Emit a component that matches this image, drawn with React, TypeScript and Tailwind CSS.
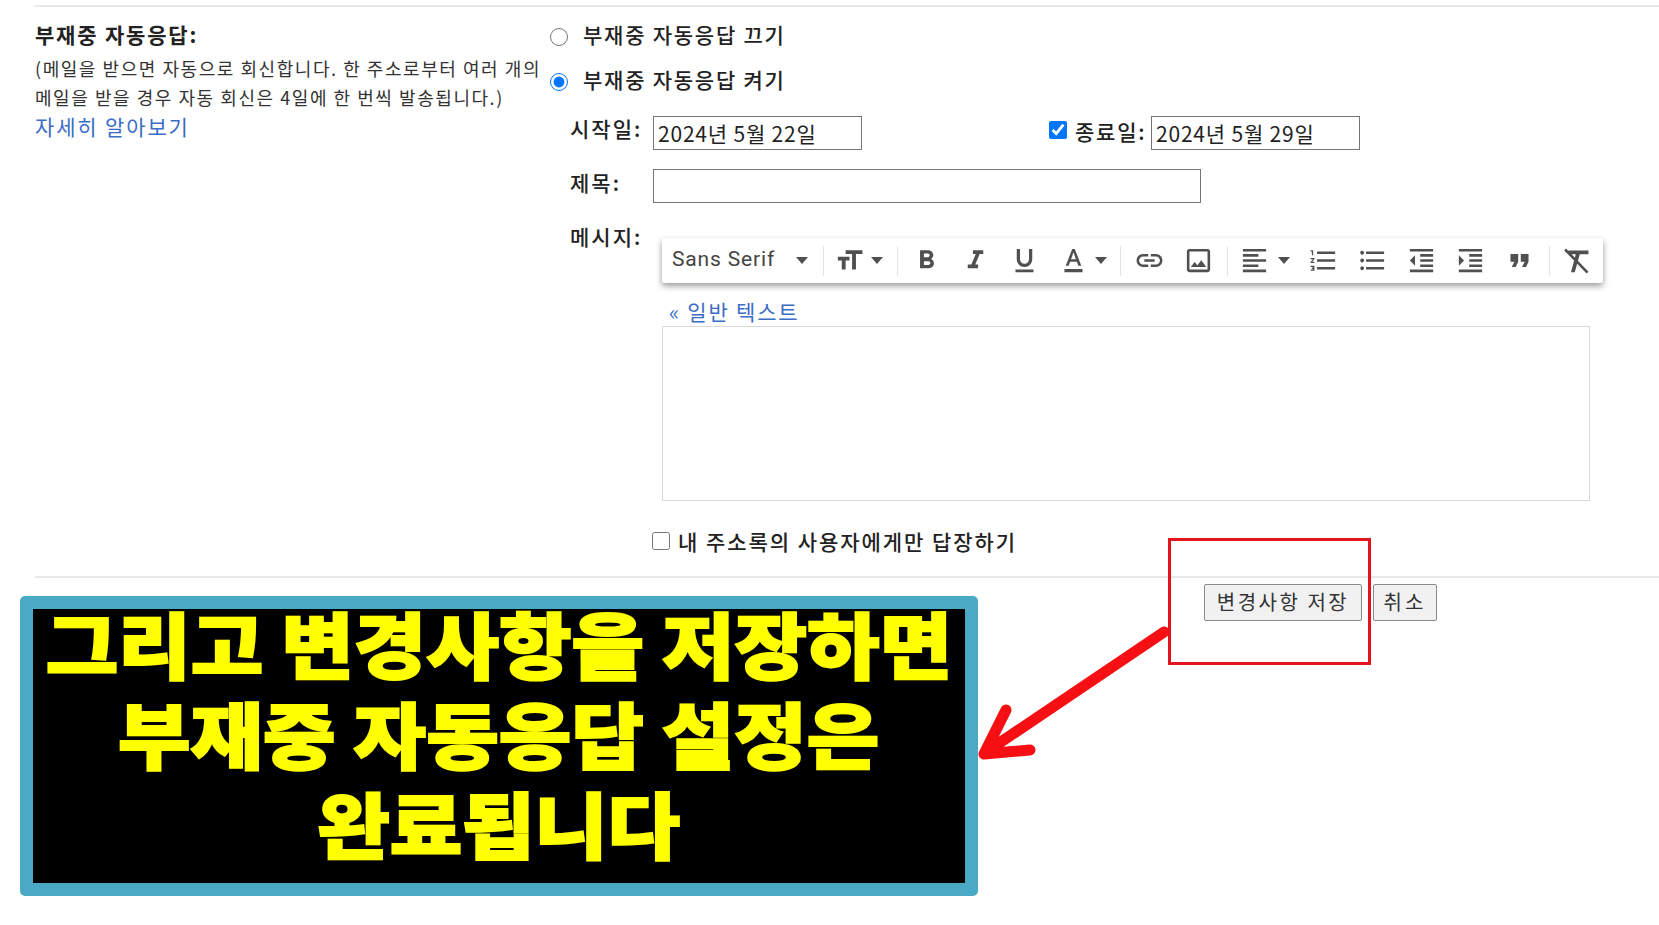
import React from 'react';

const ICONS: Record<string, string> = {
  size: 'M9 4v3h5v12h3V7h5V4H9zm-6 8h3v7h3v-7h3V9H3v3z',
  bold: 'M15.6 10.79c.97-.67 1.65-1.77 1.65-2.79 0-2.26-1.75-4-4-4H7v14h7.04c2.09 0 3.71-1.7 3.71-3.79 0-1.52-.86-2.82-2.15-3.42zM10 6.5h3c.83 0 1.5.67 1.5 1.5s-.67 1.5-1.5 1.5h-3v-3zm3.5 9H10v-3h3.5c.83 0 1.5.67 1.5 1.5s-.67 1.5-1.5 1.5z',
  italic: 'M10 4v3h2.21l-3.42 8H6v3h8v-3h-2.21l3.42-8H18V4z',
  underline: 'M12 17c3.31 0 6-2.69 6-6V3h-2.5v8c0 1.93-1.57 3.5-3.5 3.5S8.5 12.93 8.5 11V3H6v8c0 3.31 2.69 6 6 6zm-7 2v2h14v-2H5z',
  color: 'M11 3L6 16h2.25l1.12-3h5.25l1.12 3H18L13 3h-2zm-.88 8L12 5.67 13.88 11h-3.76zM5 18.5h14V21H5z',
  link: 'M3.9 12c0-1.71 1.39-3.1 3.1-3.1h4V7H7c-2.76 0-5 2.24-5 5s2.24 5 5 5h4v-1.9H7c-1.71 0-3.1-1.39-3.1-3.1zM8 13h8v-2H8v2zm9-6h-4v1.9h4c1.71 0 3.1 1.39 3.1 3.1s-1.39 3.1-3.1 3.1h-4V17h4c2.76 0 5-2.24 5-5s-2.24-5-5-5z',
  image: 'M19 5v14H5V5h14m0-2H5c-1.1 0-2 .9-2 2v14c0 1.1.9 2 2 2h14c1.1 0 2-.9 2-2V5c0-1.1-.9-2-2-2zm-4.86 8.86l-3 3.87L9 13.14 6 17h12l-3.86-5.14z',
  align: 'M15 15H3v2h12v-2zm0-8H3v2h12V7zM3 13h18v-2H3v2zm0 8h18v-2H3v2zM3 3v2h18V3H3z',
  numbered: 'M2 17h2v.5H3v1h1v.5H2v1h3v-4H2v1zm1-9h1V4H2v1h1v3zm-1 3h1.8L2 13.1v.9h3v-1H3.2L5 10.9V10H2v1zm5-6v2h14V5H7zm0 14h14v-2H7v2zm0-6h14v-2H7v2z',
  bullet: 'M4 10.5c-.83 0-1.5.67-1.5 1.5s.67 1.5 1.5 1.5 1.5-.67 1.5-1.5-.67-1.5-1.5-1.5zm0-6c-.83 0-1.5.67-1.5 1.5S3.17 7.5 4 7.5 5.5 6.83 5.5 6 4.83 4.5 4 4.5zm0 12c-.83 0-1.5.68-1.5 1.5s.68 1.5 1.5 1.5 1.5-.68 1.5-1.5-.67-1.5-1.5-1.5zM7 19h14v-2H7v2zm0-6h14v-2H7v2zm0-8v2h14V5H7z',
  outdent: 'M11 17h10v-2H11v2zm-8-5l4 4V8l-4 4zm0 9h18v-2H3v2zM3 3v2h18V3H3zm8 6h10V7H11v2zm0 4h10v-2H11v2z',
  indent: 'M3 21h18v-2H3v2zM3 8v8l4-4-4-4zm8 9h10v-2H11v2zM3 3v2h18V3H3zm8 6h10V7H11v2zm0 4h10v-2H11v2z',
  quote: 'M6 17h3l2-4V7H5v6h3zm8 0h3l2-4V7h-6v6h3z',
  clear: 'M6 3.5h16v3H6zM2.5 3.5L4 2l18 18.5-1.5 1.5zM12 6h3.2L11 21H8z',
};

const Icon = ({ name, className = 'h-[31px] w-[31px]' }: { name: string; className?: string }) => (
  <span className="flex w-[49px] items-center justify-center">
    <svg viewBox="0 0 24 24" className={`fill-[#505050] ${className}`}>
      <path d={ICONS[name]} />
    </svg>
  </span>
);

const Caret = ({ className }: { className: string }) => (
  <svg viewBox="0 0 12 7" className={`h-[7px] w-[12px] fill-[#505050] ${className}`}>
    <path d="M0 0h12L6 7z" />
  </svg>
);

const Divider = () => <div className="h-[30px] w-px bg-[#e4e4e4]" />;

const Toolbar = () => (
  <div className="flex h-[45px] w-[941px] items-center rounded-[2px] bg-white shadow-[0_3px_6px_rgba(0,0,0,0.4)]">
    <div className="flex w-[161px] items-center pl-[10px] font-['Roboto',sans-serif] text-[21px] tracking-[0.85px] text-[#444]">
      <span className="pb-[2px]">Sans Serif</span>
      <Caret className="ml-[21px]" />
    </div>
    <Divider />
    <div className="flex w-[73px] items-center pl-px">
      <Icon name="size" />
      <Caret className="-ml-[3px]" />
    </div>
    <Divider />
    <div className="flex w-[222px] items-center pl-[4px]">
      <Icon name="bold" />
      <Icon name="italic" />
      <Icon name="underline" />
      <Icon name="color" />
      <Caret className="-ml-[3px]" />
    </div>
    <Divider />
    <div className="flex w-[106px] items-center pl-[4px]">
      <Icon name="link" />
      <Icon name="image" />
    </div>
    <Divider />
    <div className="flex w-[321px] items-center pl-[2px]">
      <Icon name="align" />
      <Caret className="-ml-[1px] mr-[9px]" />
      <Icon name="numbered" />
      <Icon name="bullet" />
      <Icon name="outdent" />
      <Icon name="indent" />
      <Icon name="quote" />
    </div>
    <Divider />
    <div className="pl-[1px]">
      <Icon name="clear" className="h-[30px] w-[30px]" />
    </div>
  </div>
);

const DateInput = ({ value }: { value: string }) => (
  <input
    readOnly
    value={value}
    className="h-[34px] w-[209px] border border-[#767676] px-[4px] text-[21px] tracking-[0.8px] text-[#222] outline-none"
  />
);

export default function App() {
  return (
    <div className="relative h-[925px] w-full overflow-hidden bg-white font-['Noto_Sans_CJK_KR','Noto_Sans',sans-serif] text-[#222]">
      <div className="ml-[35px] mt-[5px] h-[2px] bg-[#e8e8e8]" />

      <div className="flex h-[569px] pl-[35px]">
        {/* 왼쪽 설명 */}
        <div className="w-[514px] pt-[12px]">
          <h2 className="text-[21px] font-bold leading-[30px] tracking-[1.8px]">부재중 자동응답:</h2>
          <p className="mt-[5px] whitespace-nowrap text-[18px] leading-[29px] tracking-[1.55px] text-[#333]">
            (메일을 받으면 자동으로 회신합니다. 한 주소로부터 여러 개의
            <br />
            메일을 받을 경우 자동 회신은 4일에 한 번씩 발송됩니다.)
          </p>
          <a className="-mt-[1px] block text-[21px] leading-[30px] tracking-[1.85px] text-[#3a6cc8]">자세히 알아보기</a>
        </div>

        {/* 오른쪽 설정 */}
        <div className="flex-1 pt-[15px]">
          <label className="flex h-[30px] items-center pl-px">
            <input type="radio" name="vacation" className="m-0 h-[18px] w-[18px]" />
            <span className="ml-[15px] pb-[4px] text-[21px] font-medium tracking-[1.75px]">부재중 자동응답 끄기</span>
          </label>
          <label className="mt-[15px] flex h-[30px] items-center pl-px">
            <input type="radio" name="vacation" defaultChecked className="m-0 h-[18px] w-[18px]" />
            <span className="ml-[15px] pb-[4px] text-[21px] font-medium tracking-[1.75px]">부재중 자동응답 켜기</span>
          </label>

          <div className="mt-[19px] flex h-[34px] items-center pl-[21px]">
            <span className="w-[83px] pb-[8px] text-[21px] font-medium tracking-[2px]">시작일:</span>
            <DateInput value="2024년 5월 22일" />
            <input type="checkbox" defaultChecked className="m-0 mb-[6px] ml-[187px] h-[18px] w-[18px]" />
            <span className="ml-[8px] w-[76px] pb-[2px] text-[21px] font-medium tracking-[1.8px]">종료일:</span>
            <DateInput value="2024년 5월 29일" />
          </div>

          <div className="mt-[19px] flex h-[34px] items-center pl-[21px]">
            <span className="w-[83px] pb-[6px] text-[21px] font-medium tracking-[2px]">제목:</span>
            <input className="h-[34px] w-[548px] border border-[#767676] outline-none" />
          </div>

          <div className="mt-[18px] flex pl-[21px]">
            <span className="w-[92px] text-[21px] font-medium leading-[30px] tracking-[2px]">메시지:</span>
            <div className="pt-[17px]">
              <Toolbar />
              <a className="ml-[7px] mt-[13px] block text-[21px] leading-[30px] tracking-[1.8px] text-[#3a6cc8]">« 일반 텍스트</a>
              <div className="h-[175px] w-[928px] border border-[#d8d8d8]" />
            </div>
          </div>

          <label className="mt-[26px] flex h-[30px] items-center pl-[103px]">
            <input type="checkbox" className="m-0 mb-[3px] h-[18px] w-[18px]" />
            <span className="ml-[8px] text-[21px] font-medium tracking-[1.95px]">내 주소록의 사용자에게만 답장하기</span>
          </label>
        </div>
      </div>

      <div className="ml-[35px] h-[2px] bg-[#e8e8e8]" />

      <div className="mt-[6px] flex gap-[11px] pl-[1204px]">
        <button className="h-[37px] w-[158px] rounded-[2px] border border-[#8a8a8a] bg-[#f1f1f1] pb-[2px] text-[20px] tracking-[2.5px] text-[#333]">변경사항 저장</button>
        <button className="h-[37px] w-[64px] rounded-[2px] border border-[#8a8a8a] bg-[#f1f1f1] pb-[2px] text-[20px] tracking-[3px] text-[#333]">취소</button>
      </div>

      {/* 주석 오버레이 */}
      <div className="absolute left-[1168px] top-[538px] h-[127px] w-[203px] border-[3px] border-[#e3141c]" />

      <svg className="absolute left-[970px] top-[620px] h-[150px] w-[200px]" viewBox="0 0 200 150">
        <path
          d="M194 12 L16 132 M36 90 L14 134 L60 130"
          fill="none"
          stroke="#f61014"
          strokeWidth="11"
          strokeLinejoin="round"
          strokeLinecap="round"
        />
      </svg>

      <div className="absolute left-[20px] top-[596px] flex h-[300px] w-[958px] flex-col items-center justify-center rounded-[5px] border-[13px] border-[#4aaac5] bg-black pb-[28px] text-center text-[72px] font-black leading-[90px] text-[#ffff00] [-webkit-text-stroke:2px_#ffff00]">
        <span className="scale-x-[1.095] whitespace-nowrap">그리고 변경사항을 저장하면</span>
        <span className="scale-x-[1.095] whitespace-nowrap">부재중 자동응답 설정은</span>
        <span className="scale-x-[1.095] whitespace-nowrap">완료됩니다</span>
      </div>
    </div>
  );
}
